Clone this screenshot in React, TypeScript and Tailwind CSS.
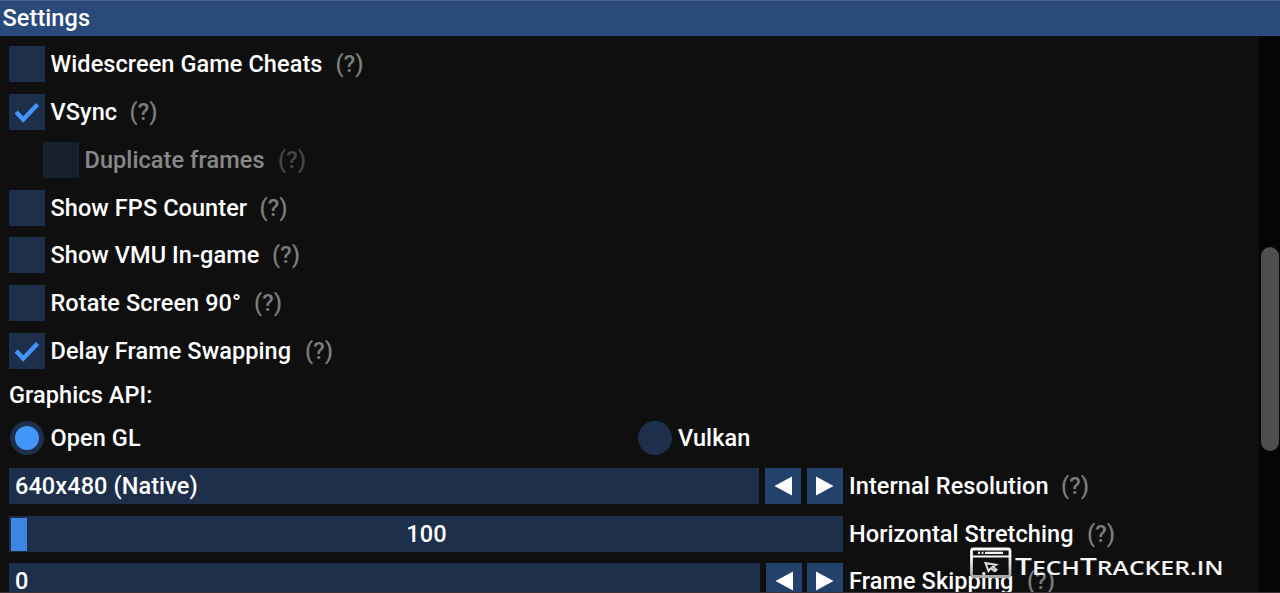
const CHECKS = [
  { label: 'Widescreen Game Cheats', row: 'h-9 mb-3', text: 'w-[284.5px]' },
  { label: 'VSync', row: 'h-9 mb-3', text: 'w-[78.5px]', on: true },
  { label: 'Duplicate frames', row: 'h-9 mb-3 pl-[34px] opacity-50', text: 'w-[193px]' },
  { label: 'Show FPS Counter', row: 'h-9 mb-[11px]', text: 'w-[208.5px]' },
  { label: 'Show VMU In-game', row: 'h-9 mb-3', text: 'w-[221px]' },
  { label: 'Rotate Screen 90°', row: 'h-9 mb-3', text: 'w-[203px]' },
  { label: 'Delay Frame Swapping', row: 'h-9 mb-3', text: 'w-[254px]', on: true },
];

function Help() {
  return <span className="text-[#7c7c7c]">(?)</span>;
}

function Check() {
  return (
    <svg viewBox="0 0 36 36" className="h-9 w-9">
      <path d="M7.2 18 L14.2 25.5 L28.5 10.5" fill="none" stroke="#4296fa" strokeWidth="4.4" />
    </svg>
  );
}

function Arrow({ left = false }: { left?: boolean }) {
  return (
    <div className="h-9 w-9 shrink-0 bg-[#23426b]">
      <svg viewBox="0 0 36 36" className="h-9 w-9" fill="#fff">
        <path d={left ? 'M9.5 18 L27 8.5 V27.5 Z' : 'M26.5 18 L9 8.5 V27.5 Z'} />
      </svg>
    </div>
  );
}

function Watermark() {
  return (
    <div className="absolute left-[970px] top-[547px] flex text-[#f4f4f4]">
      <svg width="42" height="32" viewBox="0 0 42 32" fill="none" stroke="currentColor">
        <defs>
          <linearGradient id="frame" x1="0" y1="0" x2="0" y2="1">
            <stop offset="0.3" stopColor="#f8f8f8" />
            <stop offset="1" stopColor="#a8a8a8" />
          </linearGradient>
        </defs>
        <rect x="1.5" y="2" width="38.5" height="27.5" rx="2" strokeWidth="2.8" stroke="url(#frame)" />
        <path d="M2 9.5 H40" strokeWidth="1.8" />
        <path d="M8 5.8 h2 M11.5 5.8 h2 M15 5.8 h18" strokeWidth="2.2" />
        <path d="M15.5 16 L26 17.8 L22.8 19.7 L26.5 22.7 L24.8 24.2 L21 21.2 L18.5 24 Z" strokeWidth="2" stroke="#dcdcdc" />
      </svg>
      <span className="ml-[3px] mt-[5px] h-7 origin-left scale-x-[1.3] whitespace-nowrap font-['Open_Sans'] text-[19px] font-semibold leading-7 tracking-normal">
        <span className="text-[23px]">T</span>ECH<span className="text-[23px]">T</span>RACKER.IN
      </span>
    </div>
  );
}

export default function App() {
  return (
    <div className="relative h-[593px] w-[1280px] overflow-hidden bg-[#0f0f0f] font-[Roboto,sans-serif] text-[23.5px] font-medium leading-[37px] tracking-[0.08px] text-white">
      <header className="h-9 border-t border-[#46608c] bg-[#294a7a] pl-[2.5px] leading-[35px]">Settings</header>
      <div className="flex h-[557px]">
        <main className="w-[1259px] shrink-0 pl-[9px] pt-[10px]">
          {CHECKS.map((c) => (
            <div key={c.label} className={`flex whitespace-nowrap ${c.row}`}>
              <div className="h-9 w-9 shrink-0 bg-[#1d2f4a]">{c.on && <Check />}</div>
              <span className={`ml-[5.5px] mr-[0.5px] shrink-0 ${c.text}`}>{c.label}</span>
              <Help />
            </div>
          ))}
          <div className="-mt-1 h-[43px]">Graphics API:</div>
          <div className="mb-3 flex h-9">
            <div className="flex w-[628px]">
              <div className="mx-[1px] mt-[1px] flex h-[34px] w-[34px] items-center justify-center rounded-full bg-[#1d2f4a]">
                <div className="h-6 w-6 rounded-full bg-[#4296fa]" />
              </div>
              <span className="ml-[5.5px]">Open GL</span>
            </div>
            <div className="mx-[1px] mt-[1px] h-[34px] w-[34px] rounded-full bg-[#1d2f4a]" />
            <span className="ml-[5px]">Vulkan</span>
          </div>
          <div className="mb-3 flex h-9 whitespace-nowrap">
            <div className="mr-[6px] w-[750px] bg-[#1d2f4a] pl-[6px]">640x480 (Native)</div>
            <Arrow left />
            <div className="w-[6px]" />
            <Arrow />
            <span className="ml-[6px] w-[212px]">Internal Resolution</span>
            <Help />
          </div>
          <div className="mb-[11px] flex h-9 whitespace-nowrap">
            <div className="flex w-[834px] bg-[#1d2f4a] py-[2px] pl-[2px]">
              <div className="h-[33px] w-4 bg-[#3d85e0]" />
              <span className="-mt-[2px] flex-1 pr-[17px] text-center">100</span>
            </div>
            <span className="ml-[6px] w-[238px]">Horizontal Stretching</span>
            <Help />
          </div>
          <div className="flex h-9 whitespace-nowrap">
            <div className="mr-[6px] w-[751px] bg-[#1d2f4a] pl-[6px]">0</div>
            <Arrow left />
            <div className="w-[5px]" />
            <Arrow />
            <span className="ml-[6px] w-[178px]">Frame Skipping</span>
            <Help />
          </div>
        </main>
        <aside className="w-[21px] bg-[#050505] pl-[2px] pt-[211px]">
          <div className="h-[204px] w-[18px] rounded-full bg-[#4f4f4f]" />
        </aside>
      </div>
      <div className="absolute inset-x-0 bottom-0 h-px bg-[#3b3238]" />
      <Watermark />
    </div>
  );
}
